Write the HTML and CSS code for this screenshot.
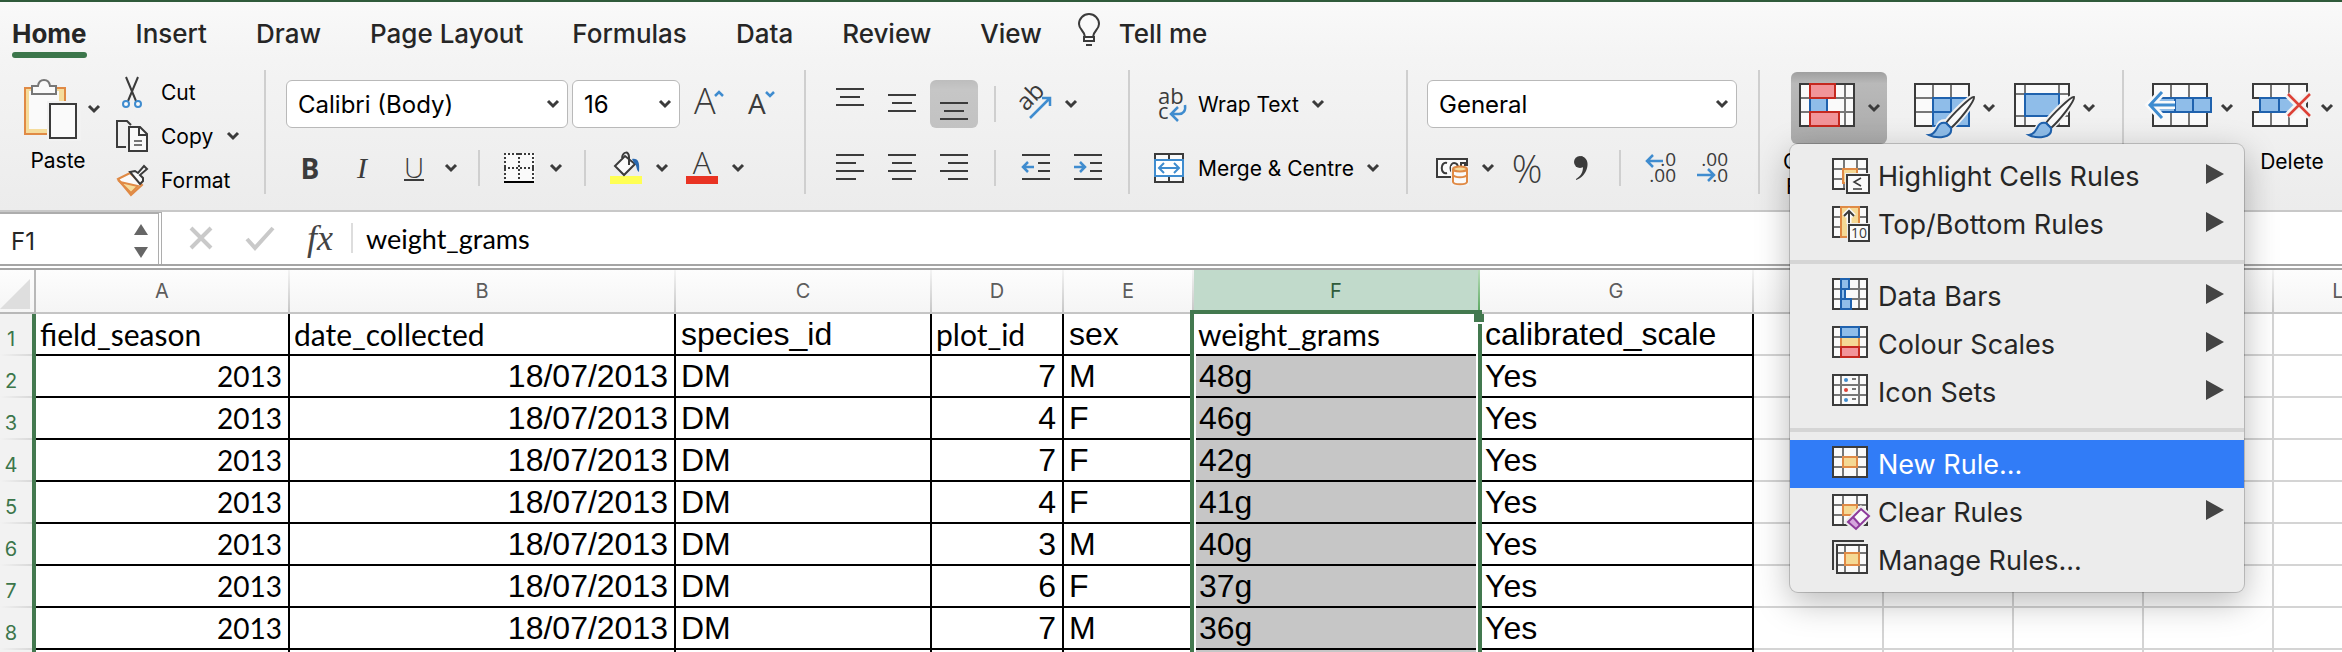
FILE: index.html
```html
<!DOCTYPE html>
<html lang="en-GB">
<head>
<meta charset="utf-8">
<title>Workbook</title>
<link rel="stylesheet" href="styles.css">
</head>
<body>
<svg class="defs" aria-hidden="true">
  <symbol id="chev" viewBox="0 0 14 10"><path d="M2 2l5 5 5-5" fill="none" stroke="currentColor" stroke-width="3"/></symbol>
  <symbol id="brush" viewBox="0 0 64 56">
    <path d="M60 14c-3-1-22 18-27 25l4 5c8-6 24-26 23-30zM32 39c-10-1-6 12-17 13 8 4 23 3 22-7z" fill="#f2f2f2" stroke="#f2f2f2" stroke-width="6"/>
    <path d="M60 14c-3-1-22 18-28 26l5 5c8-7 24-27 23-31z" fill="#fafafa" stroke="#3b3b3b" stroke-width="2"/>
    <path d="M32 40c-11-2-7 11-17 12 8 4 24 3 22-7z" fill="#8fbde9" stroke="#1f62ae" stroke-width="2"/>
  </symbol>
</svg>

<nav class="tabs" aria-label="Ribbon tabs">
  <button class="tab tab-home">Home</button>
  <button class="tab">Insert</button>
  <button class="tab">Draw</button>
  <button class="tab">Page Layout</button>
  <button class="tab">Formulas</button>
  <button class="tab">Data</button>
  <button class="tab">Review</button>
  <button class="tab">View</button>
  <button class="tab tell"><svg class="bulb" viewBox="0 0 24 34"><path d="M8 24c0-6-6-7-6-13a10 10 0 0 1 20 0c0 6-6 7-6 13z" fill="#fafafa" stroke="#3b3b3b" stroke-width="2"/><path d="M7 23v5h10v-5M9 32h6" fill="none" stroke="#3b3b3b" stroke-width="2"/></svg>Tell me</button>
</nav>

<div class="ribbon">
  <section class="group clipboard">
    <button class="paste">
      <span class="paste-top">
        <svg width="56" height="60" viewBox="0 0 56 60"><path d="M2 9h40v46H2z" fill="#f5dc9c" stroke="#e08a45" stroke-width="2"/><path d="M6 12h30v38H6z" fill="#fafafa"/><path d="M9 15V7h6c1-8 11-8 12 0h6v8z" fill="#fafafa" stroke="#777" stroke-width="2"/><path d="M24 22h34v40H24z" fill="#f2f2f2"/><path d="M27 25h26v34H27z" fill="#fafafa" stroke="#3b3b3b" stroke-width="2"/></svg>
        <svg class="chev"><use href="#chev"/></svg>
      </span>
      <span class="cap">Paste</span>
    </button>
    <div class="clip-list">
      <button class="clip"><svg width="32" height="32" viewBox="0 0 32 32"><path d="M10 1l10 24M22 1L12 25" stroke="#3b3b3b" stroke-width="2"/><circle cx="10" cy="28" r="3" fill="#fafafa" stroke="#3f8ccf" stroke-width="2"/><circle cx="22" cy="28" r="3" fill="#fafafa" stroke="#3f8ccf" stroke-width="2"/></svg>Cut</button>
      <button class="clip"><svg width="32" height="32" viewBox="0 0 32 32"><path d="M10 27H1V1h10l4 4" fill="none" stroke="#3b3b3b" stroke-width="2"/><path d="M13 7h11l7 7v17H13z" fill="#fafafa" stroke="#3b3b3b" stroke-width="2"/><path d="M23 7v8h8" fill="none" stroke="#3b3b3b" stroke-width="2"/><path d="M18 21h8M18 25h8" stroke="#777" stroke-width="2"/></svg>Copy<svg class="chev"><use href="#chev"/></svg></button>
      <button class="clip"><svg width="32" height="32" viewBox="0 0 32 32"><path d="M2 15l12-6 12 12-11 10z" fill="#fafafa" stroke="#e08a45" stroke-width="2"/><path d="M4 18l18 4-7 7z" fill="#f5dc9c" stroke="#e08a45" stroke-width="2"/><path d="M14 8l5-1 3 2 6-7 3 3-7 6 3 3 0 3-3 3z" fill="#fafafa" stroke="#3b3b3b" stroke-width="2"/></svg>Format</button>
    </div>
  </section>

  <section class="group font">
    <div class="row">
      <label class="pick pick-font"><select aria-label="Font"><option>Calibri (Body)</option></select><svg class="chev"><use href="#chev"/></svg></label>
      <label class="pick pick-size"><select aria-label="Font size"><option>16</option></select><svg class="chev"><use href="#chev"/></svg></label>
      <button class="tool tool-grow" aria-label="Increase font size"><svg width="32" height="32" viewBox="0 0 32 32"><text x="0" y="26" class="t-light" font-size="36">A</text><path d="M21 8l4-4 4 4" fill="none" stroke="#3f8ccf" stroke-width="2.5"/></svg></button>
      <button class="tool" aria-label="Decrease font size"><svg width="32" height="32" viewBox="0 0 32 32"><text x="2" y="26" class="t-icon" font-size="28">A</text><path d="M20 4l4 4 4-4" fill="none" stroke="#3f8ccf" stroke-width="2.5"/></svg></button>
    </div>
    <div class="row font-row">
      <button class="tool bold" aria-label="Bold">B</button>
      <button class="tool italic" aria-label="Italic">I</button>
      <button class="tool under" aria-label="Underline"><span>U</span><svg class="chev"><use href="#chev"/></svg></button>
      <i class="bar"></i>
      <button class="tool split" aria-label="Borders"><svg width="32" height="32" viewBox="0 0 32 32"><path d="M1 1h30v28H1z" fill="#fafafa"/><path d="M0 2h30M0 16h30M1 1v28M15 1v28M29 1v28" stroke="#3b3b3b" stroke-width="2" stroke-dasharray="2 2"/><path d="M0 30h30" stroke="#000" stroke-width="2"/></svg><svg class="chev"><use href="#chev"/></svg></button>
      <i class="bar"></i>
      <button class="tool split" aria-label="Fill colour"><svg width="32" height="32" viewBox="0 0 32 32"><path d="M0 24h32v8H0z" fill="#ffff54"/><path d="M5 14L15 4l10 8-11 11z" fill="#fafafa" stroke="#3b3b3b" stroke-width="2"/><path d="M12 6c1-7 7-7 7-1v8" fill="none" stroke="#3b3b3b" stroke-width="2"/><path d="M22 7c6-1 8 3 7 13-3-1-2-8-5-9z" fill="#2a69b0"/></svg><svg class="chev"><use href="#chev"/></svg></button>
      <button class="tool split split-flush" aria-label="Font colour"><svg width="32" height="32" viewBox="0 0 32 32"><text x="16" y="22" text-anchor="middle" class="t-light" font-size="31">A</text><path d="M0 24h32v8H0z" fill="#e93323"/></svg><svg class="chev"><use href="#chev"/></svg></button>
    </div>
  </section>

  <section class="group align">
    <div class="row">
      <button class="tool" aria-label="Top align"><svg class="lines" viewBox="0 0 28 32"><path d="M0 1h28M4 9h20M0 17h28"/></svg></button>
      <button class="tool" aria-label="Middle align"><svg class="lines" viewBox="0 0 28 32"><path d="M0 7h28M4 15h20M0 23h28"/></svg></button>
      <button class="tool pressed" aria-label="Bottom align"><svg class="lines" viewBox="0 0 28 32"><path d="M0 15h28M4 23h20M0 31h28"/></svg></button>
      <i class="bar bar-gap"></i>
      <button class="tool orient" aria-label="Orientation"><svg width="34" height="34" viewBox="0 0 34 34"><text x="8" y="25" class="t-icon" font-size="24" transform="rotate(-45 8 25)">ab</text><path d="M12 31l20-20M24 11h8v8" fill="none" stroke="#3f8ccf" stroke-width="2.5"/></svg><svg class="chev"><use href="#chev"/></svg></button>
    </div>
    <div class="row">
      <button class="tool" aria-label="Align left"><svg class="lines" viewBox="0 0 28 32"><path d="M0 3h28M0 11h20M0 19h28M0 27h20"/></svg></button>
      <button class="tool" aria-label="Centre"><svg class="lines" viewBox="0 0 28 32"><path d="M0 3h28M4 11h20M0 19h28M4 27h20"/></svg></button>
      <button class="tool" aria-label="Align right"><svg class="lines" viewBox="0 0 28 32"><path d="M0 3h28M8 11h20M0 19h28M8 27h20"/></svg></button>
      <i class="bar bar-gap"></i>
      <button class="tool" aria-label="Decrease indent"><svg class="lines" viewBox="0 0 28 32"><path d="M0 3h28M16 11h12M16 19h12M0 27h28"/><path class="blue" d="M12 15H1M6 10l-5 5 5 5"/></svg></button>
      <button class="tool" aria-label="Increase indent"><svg class="lines" viewBox="0 0 28 32"><path d="M0 3h28M16 11h12M16 19h12M0 27h28"/><path class="blue" d="M0 15h11M6 10l5 5-5 5"/></svg></button>
    </div>
  </section>

  <section class="group wrap">
    <button class="wide"><svg width="32" height="34" viewBox="0 0 32 34"><text x="4" y="17" class="t-icon" font-size="22">ab</text><text x="4" y="32" class="t-icon" font-size="22">c</text><path d="M31 18c1 6-2 9-6 9h-7M24 20l-7 7 7 7" fill="none" stroke="#3f8ccf" stroke-width="2.5"/></svg>Wrap Text<svg class="chev"><use href="#chev"/></svg></button>
    <button class="wide"><svg width="32" height="32" viewBox="0 0 32 32"><path d="M1 2h28v28H1zM15 2v6M15 24v6" fill="#fafafa" stroke="#3b3b3b" stroke-width="2"/><path d="M1 8h28v16H1z" fill="#fff" stroke="#3f8ccf" stroke-width="2"/><path d="M5 16h20M10 11l-5 5 5 5M20 11l5 5-5 5" fill="none" stroke="#3f8ccf" stroke-width="2"/></svg>Merge &amp; Centre<svg class="chev"><use href="#chev"/></svg></button>
  </section>

  <section class="group number">
    <div class="row"><label class="pick pick-number"><select aria-label="Number format"><option>General</option></select><svg class="chev"><use href="#chev"/></svg></label></div>
    <div class="row number-row">
      <button class="tool money" aria-label="Currency"><svg width="32" height="32" viewBox="0 0 32 32"><path d="M1 7h30v18H1z" fill="#fafafa" stroke="#3b3b3b" stroke-width="2"/><path d="M11 11c-7-2-7 12 0 10M20 21c-8 0-6-10-2-10 2 0 4 1 4 5M25 14v-3h4v3" fill="none" stroke="#3b3b3b" stroke-width="2"/><path d="M15 14h18v20H15z" fill="#f2f2f2"/><path d="M17 17v13c1 3 13 3 14 0V17" fill="#fafafa" stroke="#e08a45" stroke-width="2"/><ellipse cx="24" cy="17" rx="7" ry="2.5" fill="#f5dc9c" stroke="#e08a45" stroke-width="2"/><path d="M17 23c2 3 12 3 14 0" fill="none" stroke="#e08a45" stroke-width="2"/></svg><svg class="chev"><use href="#chev"/></svg></button>
      <button class="tool percent" aria-label="Percent style">%</button>
      <button class="tool comma" aria-label="Comma style"><svg width="16" height="26" viewBox="0 0 16 26"><circle cx="7" cy="7" r="6" fill="#3b3b3b"/><path d="M8 1c12 3 6 21-5 24v-1c5-3 7-7 7-12z" fill="#3b3b3b"/></svg></button>
      <i class="bar"></i>
      <button class="tool decimal" aria-label="Increase decimal"><svg width="32" height="32" viewBox="0 0 32 32"><text x="31" y="14" text-anchor="end" class="t-num">.0</text><text x="31" y="30" text-anchor="end" class="t-num">.00</text><path d="M18 9H2M8 3L2 9l6 6" fill="none" stroke="#3f8ccf" stroke-width="2.5"/></svg></button>
      <button class="tool decimal" aria-label="Decrease decimal"><svg width="32" height="32" viewBox="0 0 32 32"><text x="31" y="14" text-anchor="end" class="t-num">.00</text><text x="31" y="30" text-anchor="end" class="t-num">.0</text><path d="M0 23h17M11 17l6 6-6 6" fill="none" stroke="#3f8ccf" stroke-width="2.5"/></svg></button>
    </div>
  </section>

  <section class="group styles">
    <div class="big-wrap">
      <button class="big" aria-haspopup="menu" aria-expanded="true">
        <span class="face face-on"><svg width="60" height="56" viewBox="0 0 60 56"><path d="M1 1h54v42H1z" fill="#fafafa"/><path d="M11 1v42M36 1v42M46 1v42M1 15h54M1 29h54" stroke="#777" stroke-width="2"/><path d="M28 16h17v12H28z" fill="#fafafa"/><path d="M1 1h54v42H1z" fill="none" stroke="#3b3b3b" stroke-width="2"/><path d="M11 15h17v14H11z" fill="#8fbde9" stroke="#1f62ae" stroke-width="2"/><path d="M11 1h25v14H11zM11 29h29v14H11z" fill="#f29499" stroke="#c5281f" stroke-width="2"/></svg><svg class="chev"><use href="#chev"/></svg></span>
        <span class="cap">Conditional<br>Formatting</span>
      </button>
      <div class="menu" role="menu">
        <button class="item" role="menuitem"><svg class="mi" viewBox="0 0 36 36"><path d="M1 1h34v30H1z" fill="#fafafa"/><path d="M12 1v30M25 1v30M1 11h34M1 21h34" stroke="#777" stroke-width="2"/><path d="M1 1h34v30H1z" fill="none" stroke="#3b3b3b" stroke-width="2"/><path d="M11 11h14v14H11z" fill="#f5d994" stroke="#e08a45" stroke-width="2"/><path d="M13 15h26v22H13z" fill="#ececec"/><path d="M15 17h22v18H15z" fill="#fafafa" stroke="#3b3b3b" stroke-width="2"/><path d="M29 20l-7 4 7 4M21 31h9" fill="none" stroke="#3b3b3b" stroke-width="1.5"/></svg>Highlight Cells Rules<span class="arrow"></span></button>
        <button class="item" role="menuitem"><svg class="mi" viewBox="0 0 36 36"><path d="M1 1h34v30H1z" fill="#fafafa"/><path d="M1 11h34M1 21h34" stroke="#777" stroke-width="2"/><path d="M1 1h34v30H1z" fill="none" stroke="#3b3b3b" stroke-width="2"/><path d="M9 1h18v30H9z" fill="#f5d994" stroke="#e08a45" stroke-width="2"/><path d="M17 18V5M12 10l5-5 5 5" fill="none" stroke="#fafafa" stroke-width="5"/><path d="M17 18V5M12 10l5-5 5 5" fill="none" stroke="#3b3b3b" stroke-width="2"/><path d="M15 17h24v20H15z" fill="#ececec"/><path d="M17 19h20v16H17z" fill="#fafafa" stroke="#3b3b3b" stroke-width="2"/><text x="27" y="32" text-anchor="middle" class="t-icon" font-size="14">10</text></svg>Top/Bottom Rules<span class="arrow"></span></button>
        <hr>
        <button class="item" role="menuitem"><svg class="mi" viewBox="0 0 36 36"><path d="M1 1h34v30H1z" fill="#fafafa"/><path d="M9 1v30M27 1v30M1 11h34M1 21h34" stroke="#777" stroke-width="2"/><path d="M1 1h34v30H1z" fill="none" stroke="#3b3b3b" stroke-width="2"/><path d="M9 1h8v10H9zM9 11h4v10H9zM9 21h10v10H9z" fill="#8fbde9" stroke="#1f62ae" stroke-width="2"/></svg>Data Bars<span class="arrow"></span></button>
        <button class="item" role="menuitem"><svg class="mi" viewBox="0 0 36 36"><path d="M1 1h34v30H1z" fill="#fafafa"/><path d="M1 11h34M1 21h34" stroke="#777" stroke-width="2"/><path d="M1 1h34v30H1z" fill="none" stroke="#3b3b3b" stroke-width="2"/><path d="M9 11h18v10H9z" fill="#f5d994" stroke="#e08a45" stroke-width="2"/><path d="M9 1h18v10H9z" fill="#8fbde9" stroke="#1f62ae" stroke-width="2"/><path d="M9 21h18v10H9z" fill="#f29499" stroke="#c5281f" stroke-width="2"/></svg>Colour Scales<span class="arrow"></span></button>
        <button class="item" role="menuitem"><svg class="mi" viewBox="0 0 36 36"><path d="M1 1h34v30H1z" fill="#fafafa"/><path d="M9 1v30M27 1v30M1 11h34M1 21h34M20 5h4M20 15h4M20 25h4" stroke="#777" stroke-width="2"/><path d="M1 1h34v30H1z" fill="none" stroke="#3b3b3b" stroke-width="2"/><circle cx="14" cy="6" r="2" fill="#3f8ccf"/><circle cx="14" cy="16" r="2" fill="#dd4238"/><circle cx="14" cy="26" r="2" fill="#3f8ccf"/></svg>Icon Sets<span class="arrow"></span></button>
        <hr>
        <button class="item item-on" role="menuitem"><svg class="mi" viewBox="0 0 36 36"><path d="M1 1h34v30H1z" fill="#fafafa"/><path d="M11 1v30M25 1v30M1 11h34M1 21h34" stroke="#777" stroke-width="2"/><path d="M1 1h34v30H1z" fill="none" stroke="#3b3b3b" stroke-width="2"/><path d="M11 11h14v10H11z" fill="#f5d994" stroke="#e08a45" stroke-width="2"/></svg>New Rule...</button>
        <button class="item" role="menuitem"><svg class="mi" viewBox="0 0 36 36"><path d="M1 1h34v30H1z" fill="#fafafa"/><path d="M11 1v30M25 1v30M1 11h34M1 21h34" stroke="#777" stroke-width="2"/><path d="M1 1h34v30H1z" fill="none" stroke="#3b3b3b" stroke-width="2"/><path d="M11 11h14v10H11z" fill="#f5d994" stroke="#e08a45" stroke-width="2"/><path d="M29 15l8 7-13 13-8-7z" fill="#fafafa" stroke="#ececec" stroke-width="6"/><path d="M29 15l8 7-13 13-8-7z" fill="#fafafa"/><path d="M21 23l7 8-4 4-8-7z" fill="#d5a6dd"/><path d="M29 15l8 7-13 13-8-7zM21 23l7 8" fill="none" stroke="#8d3a9b" stroke-width="2"/></svg>Clear Rules<span class="arrow"></span></button>
        <button class="item" role="menuitem"><svg class="mi" viewBox="0 0 36 36"><path d="M1 28V-1h31" fill="none" stroke="#3b3b3b" stroke-width="2"/><path d="M5 3h30v28H5z" fill="#fafafa"/><path d="M13 3v28M27 3v28M5 11h30M5 23h30" stroke="#777" stroke-width="2"/><path d="M5 3h30v28H5z" fill="none" stroke="#3b3b3b" stroke-width="2"/><path d="M13 11h14v12H13z" fill="#f5d994" stroke="#e08a45" stroke-width="2"/></svg>Manage Rules...</button>
      </div>
    </div>
    <button class="big big-table" aria-label="Table styles"><span class="face"><svg width="60" height="56" viewBox="0 0 60 56"><path d="M1 1h54v42H1z" fill="#fafafa"/><path d="M19 1v42M37 1v42M1 15h54M1 29h54" stroke="#777" stroke-width="2"/><path d="M1 1h54v42H1z" fill="none" stroke="#3b3b3b" stroke-width="2"/><path d="M19 15h36v28H19zM19 29h36M37 15v28" fill="#8fbde9" stroke="#1f62ae" stroke-width="2"/><use href="#brush" width="64" height="56"/></svg><svg class="chev"><use href="#chev"/></svg></span></button>
    <button class="big" aria-label="Cell styles"><span class="face"><svg width="60" height="56" viewBox="0 0 60 56"><path d="M1 1h54v42H1z" fill="#fafafa"/><path d="M11 1v42M45 1v42M1 11h54M1 33h54" stroke="#777" stroke-width="2"/><path d="M1 1h54v42H1z" fill="none" stroke="#3b3b3b" stroke-width="2"/><path d="M11 11h34v22H11z" fill="#8fbde9" stroke="#1f62ae" stroke-width="2"/><use href="#brush" width="64" height="56"/></svg><svg class="chev"><use href="#chev"/></svg></span></button>
  </section>

  <section class="group cells">
    <button class="big" aria-label="Insert cells"><span class="face"><svg width="64" height="56" viewBox="0 0 64 56"><path d="M5 1h54v42H5z" fill="#fafafa"/><path d="M23 1v42M41 1v42" stroke="#777" stroke-width="2"/><path d="M5 1h54v42H5z" fill="none" stroke="#3b3b3b" stroke-width="2"/><path d="M8 15h55v14H8zM27 15v14M45 15v14" fill="#8fbde9" stroke="#1f62ae" stroke-width="2"/><path d="M27 22H3M14 9L2 22l12 13" fill="none" stroke="#fafafa" stroke-width="8"/><path d="M14 9L2 22l12 13M3 22h24" fill="none" stroke="#3f8ccf" stroke-width="3"/></svg><svg class="chev"><use href="#chev"/></svg></span></button>
    <button class="big"><span class="face"><svg width="60" height="56" viewBox="0 0 60 56"><path d="M1 1h54v42H1z" fill="#fafafa"/><path d="M19 1v42M37 1v42" stroke="#777" stroke-width="2"/><path d="M1 1h54v42H1z" fill="none" stroke="#3b3b3b" stroke-width="2"/><path d="M0 15h10v14H0z" fill="#f2f2f2"/><path d="M0 15h9M0 29h9" stroke="#3b3b3b" stroke-width="2"/><path d="M8 15h32l5 7-5 7H8zM27 15v14" fill="#8fbde9" stroke="#1f62ae" stroke-width="2"/><path d="M36 11l22 22M58 11L36 33" stroke="#f4f4f4" stroke-width="8"/><path d="M36 11l22 22M58 11L36 33" stroke="#dd4238" stroke-width="2.5"/></svg><svg class="chev"><use href="#chev"/></svg></span><span class="cap">Delete</span></button>
  </section>
</div>

<div class="formula">
  <div class="namebox"><input aria-label="Name box" value="F1"><span class="steps"><i class="up"></i><i class="down"></i></span></div>
  <button class="fbtn" aria-label="Cancel"><svg width="24" height="26" viewBox="0 0 24 26"><path d="M2 3l20 20M22 3L2 23" stroke="#c9c9c9" stroke-width="4"/></svg></button>
  <button class="fbtn fbtn-ok" aria-label="Enter"><svg width="30" height="26" viewBox="0 0 30 26"><path d="M2 14l8 9L28 3" fill="none" stroke="#c9c9c9" stroke-width="4"/></svg></button>
  <button class="fbtn fx" aria-label="Insert function">fx</button>
  <input class="fvalue" aria-label="Formula" value="weight_grams">
</div>

<main class="sheet">
<table>
  <colgroup><col class="c-row"><col class="c-a"><col class="c-b"><col class="c-c"><col class="c-d"><col class="c-e"><col class="c-f"><col class="c-g"><col class="c-x"><col class="c-x"><col class="c-x"><col class="c-x"><col class="c-x"></colgroup>
  <thead><tr><th class="corner"><svg width="30" height="30" viewBox="0 0 30 30"><path d="M30 0v30H0z" fill="#dedede"/></svg></th><th>A</th><th>B</th><th>C</th><th>D</th><th>E</th><th class="picked">F</th><th>G</th><th aria-label="H"></th><th aria-label="I"></th><th aria-label="J"></th><th aria-label="K"></th><th>L</th></tr></thead>
  <tbody>
    <tr><th>1</th><td class="cal">field_season</td><td class="cal">date_collected</td><td>species_id</td><td class="cal">plot_id</td><td>sex</td><td class="cal active">weight_grams<span class="marquee"></span><span class="handle"></span></td><td>calibrated_scale</td><td class="e"></td><td class="e"></td><td class="e"></td><td class="e"></td><td class="e"></td></tr>
    <tr><th>2</th><td class="year">2013</td><td class="n">18/07/2013</td><td>DM</td><td class="n">7</td><td>M</td><td class="s">48g</td><td>Yes</td><td class="e"></td><td class="e"></td><td class="e"></td><td class="e"></td><td class="e"></td></tr>
    <tr><th>3</th><td class="year">2013</td><td class="n">18/07/2013</td><td>DM</td><td class="n">4</td><td>F</td><td class="s">46g</td><td>Yes</td><td class="e"></td><td class="e"></td><td class="e"></td><td class="e"></td><td class="e"></td></tr>
    <tr><th>4</th><td class="year">2013</td><td class="n">18/07/2013</td><td>DM</td><td class="n">7</td><td>F</td><td class="s">42g</td><td>Yes</td><td class="e"></td><td class="e"></td><td class="e"></td><td class="e"></td><td class="e"></td></tr>
    <tr><th>5</th><td class="year">2013</td><td class="n">18/07/2013</td><td>DM</td><td class="n">4</td><td>F</td><td class="s">41g</td><td>Yes</td><td class="e"></td><td class="e"></td><td class="e"></td><td class="e"></td><td class="e"></td></tr>
    <tr><th>6</th><td class="year">2013</td><td class="n">18/07/2013</td><td>DM</td><td class="n">3</td><td>M</td><td class="s">40g</td><td>Yes</td><td class="e"></td><td class="e"></td><td class="e"></td><td class="e"></td><td class="e"></td></tr>
    <tr><th>7</th><td class="year">2013</td><td class="n">18/07/2013</td><td>DM</td><td class="n">6</td><td>F</td><td class="s">37g</td><td>Yes</td><td class="e"></td><td class="e"></td><td class="e"></td><td class="e"></td><td class="e"></td></tr>
    <tr><th>8</th><td class="year">2013</td><td class="n">18/07/2013</td><td>DM</td><td class="n">7</td><td>M</td><td class="s">36g</td><td>Yes</td><td class="e"></td><td class="e"></td><td class="e"></td><td class="e"></td><td class="e"></td></tr>
    <tr><th></th><td></td><td></td><td></td><td></td><td></td><td class="s"></td><td></td><td class="e"></td><td class="e"></td><td class="e"></td><td class="e"></td><td class="e"></td></tr>
  </tbody>
</table>
</main>
</body>
</html>
```
FILE: styles.css
```css
* { box-sizing: border-box; }
body { margin: 0; height: 100vh; display: flex; flex-direction: column; overflow: hidden; background: #fff; font-family: Inter, "Liberation Sans", sans-serif; color: #000; }
button, input, select { font: inherit; color: inherit; background: none; border: 0; padding: 0; margin: 0; border-radius: 0; }
svg { display: block; flex: none; overflow: visible; }
.defs { position: absolute; width: 0; height: 0; }
.chev { width: 14px; height: 10px; color: #3b3b3b; }
.t-light { font-family: "Open Sans", sans-serif; font-weight: 300; fill: #3b3b3b; }
.t-icon { font-family: "Open Sans", sans-serif; fill: #3b3b3b; }
.t-num { font-family: "Open Sans", sans-serif; font-size: 19px; fill: #3b3b3b; }

/* tabs */
.tabs { flex: none; display: flex; gap: 49px; height: 60px; padding: 0 12px; border-top: 2px solid #2f5a3a; background: linear-gradient(#f9f9f9, #f4f4f4); }
.tab { display: flex; align-items: center; height: 56px; padding-top: 12px; font-size: 26px; font-weight: 500; color: #262626; white-space: nowrap; border-bottom: 6px solid transparent; }
.tab-home { position: relative; font-weight: 700; }
.tab-home::after { content: ""; position: absolute; left: 0; right: 0; bottom: -6px; height: 6px; border-radius: 3px; background: #3c764b; }
.tell { gap: 18px; margin-left: -14px; }
.bulb { width: 24px; height: 34px; margin-bottom: 6px; }

/* ribbon */
.ribbon { flex: none; display: grid; grid-template-columns: 266px 540px 324px 278px 352px 364px auto; height: 152px; padding: 10px 0 16px; border-bottom: 2px solid #c8c8c8; background: linear-gradient(#f4f4f4, #ececec); font-size: 21px; }
.group { border-right: 2px solid #cfcfcf; height: 124px; padding-top: 10px; display: flex; flex-direction: column; gap: 16px; }
.row { display: flex; align-items: center; height: 48px; }
.cap { line-height: 25px; text-align: center; white-space: nowrap; }
.bar { width: 2px; height: 36px; background: #cfcfcf; }
.tool { display: flex; align-items: center; justify-content: center; width: 48px; height: 48px; color: #3b3b3b; }

.clipboard { flex-direction: row; gap: 0; padding-left: 23px; }
.paste { display: flex; flex-direction: column; align-items: flex-start; width: 93px; }
.paste-top { display: flex; align-items: center; gap: 8px; height: 60px; padding-bottom: 2px; }
.paste .cap { width: 70px; margin-top: 8px; }
.clip-list { display: flex; flex-direction: column; gap: 12px; margin-top: -4px; }
.clip { display: flex; align-items: center; gap: 13px; height: 32px; }

.font { padding-left: 20px; }
.pick { display: grid; align-items: center; height: 48px; border: 1px solid #b9b9b9; border-radius: 6px; background: #fff; }
.pick > * { grid-area: 1 / 1; }
.pick select { appearance: none; width: 100%; height: 100%; padding-left: 11px; font-size: 24px; }
.pick .chev { justify-self: end; margin-right: 7px; pointer-events: none; }
.pick-font { width: 282px; margin-right: 4px; }
.pick-size { width: 108px; }
.pick-number { width: 310px; }
.tool-grow { margin: 0 4px 0 6px; }
.font-row { display: grid; grid-template-columns: 48px 56px 88px 2px 104px 2px 100px 76px; }
.bold { font: 700 28px "Open Sans", sans-serif; }
.italic { width: 56px; font: italic 30px "Liberation Serif", serif; }
.under { width: 88px; gap: 20px; padding-right: 6px; font: 300 28px "Open Sans", sans-serif; }
.under span { line-height: 24px; border-bottom: 2px solid #3b3b3b; }
.split { width: 100px; justify-content: flex-start; gap: 13px; padding-left: 24px; }
.split-flush { padding-left: 0; }

.align { padding-left: 20px; }
.align .row { gap: 4px; }
.bar-gap { margin: 0 12px; }
.pressed { border-radius: 6px; background: linear-gradient(#bdbdbd, #c6c6c6 20%, #c2c2c2); }
.lines { width: 28px; height: 32px; fill: none; stroke: #3b3b3b; stroke-width: 2; }
.lines .blue { stroke: #3f8ccf; stroke-width: 2.5; }
.orient { width: 72px; gap: 12px; }

.wrap { padding-left: 24px; }
.wide { display: flex; align-items: center; gap: 12px; height: 48px; white-space: nowrap; }

.number { padding-left: 19px; }
.number-row { display: grid; grid-template-columns: 73px 54px 65px 2px 56px 52px; }
.money { width: 73px; gap: 13px; padding-left: 4px; }
.percent { width: 54px; font: 300 38px "Open Sans", sans-serif; }
.comma { width: 54px; }
.decimal { width: 100%; justify-content: flex-end; }

.styles { flex-direction: row; gap: 0; padding: 2px 0 0 31px; }
.cells { flex-direction: row; gap: 8px; padding: 2px 0 0 16px; border-right: 0; }
.big-wrap { position: relative; width: 96px; height: 72px; }
.big { display: flex; flex-direction: column; align-items: center; width: 100px; gap: 5px; }
.big-wrap .big, .cells .big { width: 96px; }
.big-table { margin-left: 19px; }
.face { display: flex; align-items: center; gap: 8px; width: 100%; height: 72px; padding: 6px 0 0 8px; border-radius: 6px; flex: none; }
.face .chev { margin-top: -6px; }
.face-on { background: linear-gradient(#9f9f9f, #b9b9b9 16%, #ababab); }

/* drop-down menu */
.menu { position: absolute; z-index: 5; top: 100%; left: -1px; width: 454px; padding: 8px 0; border-radius: 8px; background: #ececec; box-shadow: 0 0 0 1px rgba(0, 0, 0, .18), 0 10px 34px rgba(0, 0, 0, .28); }
.menu hr { margin: 12px 0 8px; border: 0; height: 4px; background: #d5d5d5; }
.item { display: flex; align-items: center; gap: 10px; width: 100%; height: 48px; padding: 0 20px 0 42px; font-size: 27px; color: #262626; white-space: nowrap; }
.item-on { background: #317cf7; color: #fff; }
.mi { width: 36px; height: 36px; }
.arrow { margin: 0 0 4px auto; border: 10px solid transparent; border-left: 18px solid #444; border-right: 0; }

/* formula bar */
.formula { flex: none; display: flex; align-items: center; height: 58px; background: #fff; border-bottom: 6px double #a5a5a5; }
.namebox { display: flex; align-items: center; align-self: stretch; width: 162px; padding: 4px 10px 0 11px; border-top: 2px solid #adadad; border-right: 4px double #adadad; }
.namebox input { flex: 1; min-width: 0; font-size: 24px; color: #262626; }
.steps { display: flex; flex-direction: column; gap: 12px; }
.up, .down { border: 7px solid transparent; }
.up { border-top: 0; border-bottom: 11px solid #666; }
.down { border-bottom: 0; border-top: 11px solid #666; }
.fbtn { display: flex; justify-content: center; width: 64px; }
.namebox + .fbtn { margin-left: 7px; }
.fbtn-ok { width: 54px; }
.fx { justify-content: flex-start; width: 46px; margin: 0 0 0 20px; font: italic 36px/40px "Liberation Serif", serif; color: #444; border-right: 2px solid #ddd; height: 30px; align-items: center; }
.fvalue { flex: 1; min-width: 0; padding-left: 13px; font: 27px Lato, sans-serif; }

/* sheet */
.sheet { flex: 1; min-height: 0; overflow: hidden; }
table { table-layout: fixed; width: 2404px; border-collapse: separate; border-spacing: 0; }
.c-row { width: 36px; } .c-a { width: 254px; } .c-b { width: 386px; } .c-c { width: 256px; } .c-d { width: 132px; } .c-e { width: 130px; } .c-f { width: 286px; } .c-g { width: 274px; } .c-x { width: 130px; }
thead th { height: 44px; padding: 0; font-size: 20px; font-weight: 400; color: #5c5c5c; border-bottom: 2px solid #b8b8b8; border-right: 2px solid; border-image: linear-gradient(#f6f6f6, #c4c4c4) 2; background: linear-gradient(#fdfdfd, #f5f5f5); }
thead .corner { padding: 6px 0 0; border-image: none; border-color: #b8b8b8; }
thead .picked { color: #2f5a3a; border-image: linear-gradient(#bfe0c0, #55a55a) 2; background: #c1dacb; }
tbody th { height: 42px; padding: 8px 10px 0 0; font-size: 20px; line-height: 24px; font-weight: 400; color: #3c764b; border-right: 4px solid #43794f; background: linear-gradient(90deg, #f2f2f2, #d8d8d8) bottom / 100% 2px no-repeat #f2f2f2; }
td { height: 42px; padding: 1px 6px 0 5px; font: 32px/39px "Liberation Sans", Arial, sans-serif; white-space: nowrap; border-right: 2px solid #000; border-bottom: 2px solid #000; }
.cal { padding-left: 4px; font: 30px/39px Lato, sans-serif; }
.year { font: 28px/39px Lato, sans-serif; }
.n, .year { text-align: right; }
.s { background: #c6c6c6; }
.e { border-color: #d4d4d4; }
.active { position: relative; }
.marquee { position: absolute; z-index: 2; top: -4px; left: -4px; right: -4px; height: 400px; border: 4px solid #43794f; box-shadow: inset 0 0 0 2px #fff; pointer-events: none; }
.handle { position: absolute; z-index: 3; top: 0; right: -6px; width: 10px; height: 8px; background: #43794f; box-shadow: 0 2px #fff; }
```
